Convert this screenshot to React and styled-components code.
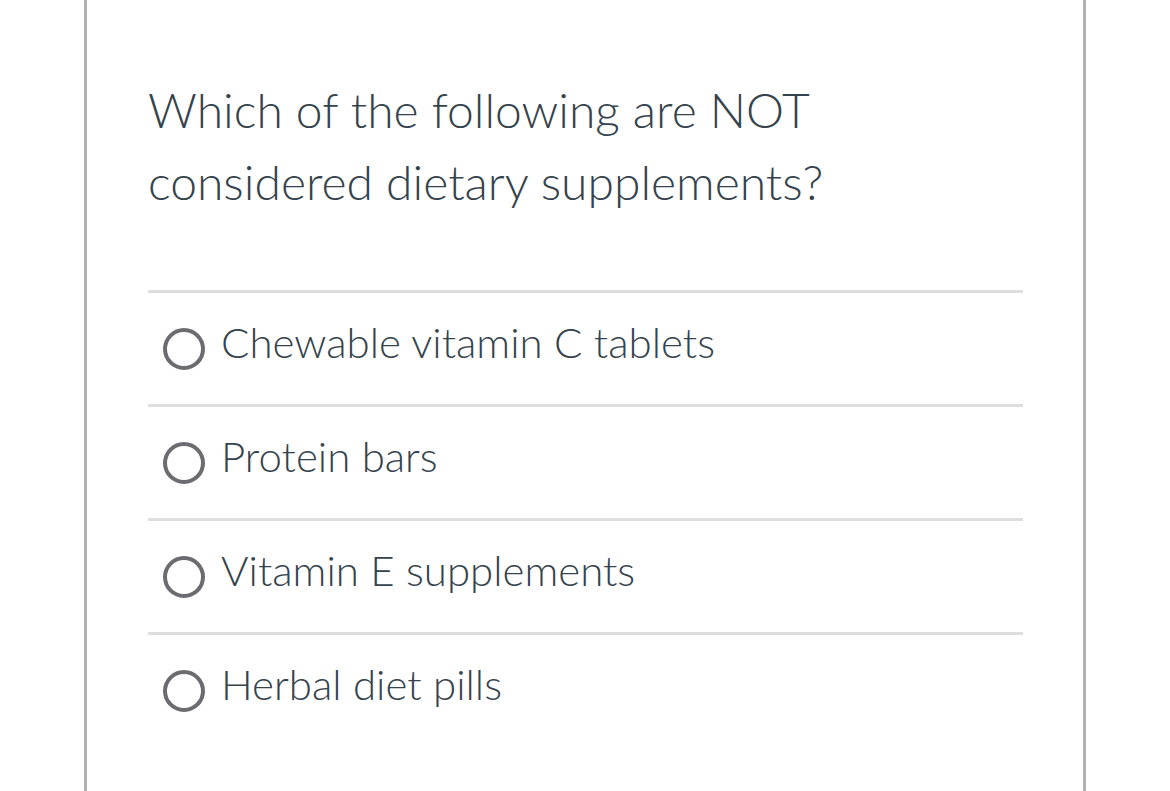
import React from "react";
import styled, { createGlobalStyle } from "styled-components";

const GlobalStyle = createGlobalStyle`
  html, body {
    margin: 0;
    padding: 0;
    background: #ffffff;
    font-family: "Lato Light", Lato, "Open Sans", sans-serif;
    color: #2d3b45;
  }
`;

const Page = styled.div`
  height: 791px;
  overflow: hidden;
  padding-left: 84px;
`;

const Card = styled.div`
  box-sizing: content-box;
  width: 875px;
  min-height: 791px;
  border-left: 3px solid #b1b1b1;
  border-right: 3px solid #b1b1b1;
  padding: 74px 60px 0 61px;
`;

const Question = styled.h2`
  margin: 0 0 72px 0;
  font-family: "Lato Light", Lato, sans-serif;
  font-weight: 300;
  font-size: 48px;
  line-height: 72px;
  color: #35434d;
  max-width: 720px;
`;

const Options = styled.div`
  display: flex;
  flex-direction: column;
`;

const Option = styled.label`
  display: flex;
  align-items: center;
  gap: 16px;
  height: 111px;
  border-top: 3px solid #dedede;
  padding-left: 15px;
`;

const Radio = styled.span`
  width: 34px;
  height: 34px;
  border: 4px solid #6b6b70;
  border-radius: 50%;
  flex: none;
`;

const OptionText = styled.span`
  font-family: "Lato Light", Lato, sans-serif;
  font-weight: 300;
  font-size: 42px;
  color: #35434d;
  line-height: 1;
  margin-top: -14px;
`;

const answers = [
  "Chewable vitamin C tablets",
  "Protein bars",
  "Vitamin E supplements",
  "Herbal diet pills",
];

export default function App() {
  return (
    <>
      <GlobalStyle />
      <Page>
        <Card>
          <Question>Which of the following are NOT considered dietary supplements?</Question>
          <Options>
            {answers.map((a) => (
              <Option key={a}>
                <Radio />
                <OptionText>{a}</OptionText>
              </Option>
            ))}
          </Options>
        </Card>
      </Page>
    </>
  );
}
